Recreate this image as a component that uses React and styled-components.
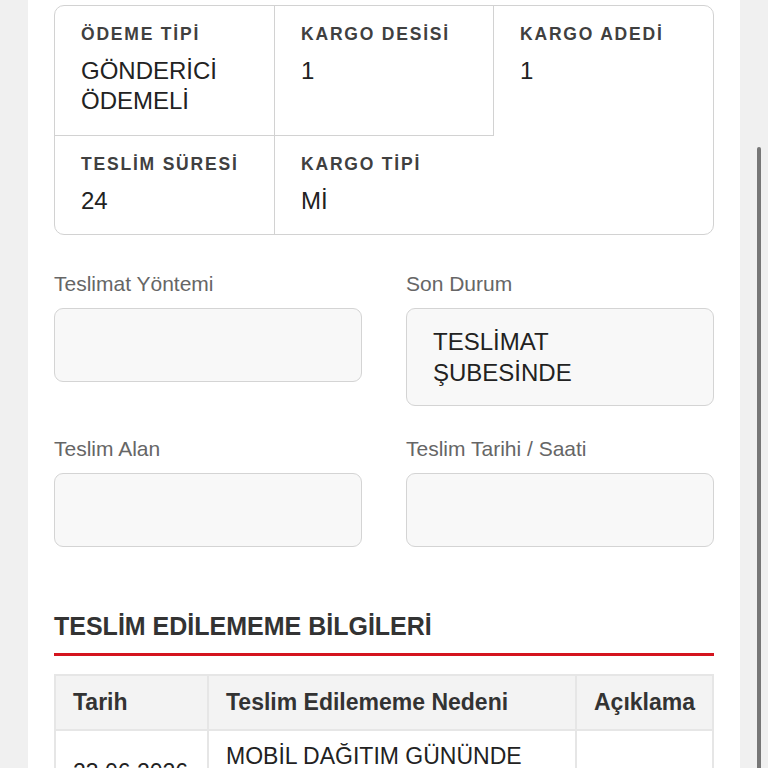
import React from "react";
import styled, { createGlobalStyle } from "styled-components";

const GlobalStyle = createGlobalStyle`
  html, body {
    margin: 0;
    padding: 0;
    background: #f0f0f0;
    font-family: "Liberation Sans", Arial, Helvetica, sans-serif;
    overflow: hidden;
  }
  * { box-sizing: border-box; }
`;

const Page = styled.div`
  display: flex;
  height: 768px;
  padding: 0 28px;
  background: #f0f0f0;
  overflow: hidden;
`;

const Panel = styled.main`
  flex: 1;
  background: #ffffff;
  padding: 5px 26px 0 26px;
`;

const InfoBox = styled.section`
  display: grid;
  grid-template-columns: 220px 219px 1fr;
  border: 1.5px solid #d2d2d2;
  border-radius: 10px;
`;

const InfoCell = styled.div`
  padding: 16px 20px 18.5px 26px;
  border-right: ${(p) => (p.$right ? "1.5px solid #d2d2d2" : "none")};
  border-bottom: ${(p) => (p.$bottom ? "1.5px solid #d2d2d2" : "none")};
`;

const InfoLabel = styled.div`
  font-size: 17.5px;
  line-height: 24px;
  font-weight: 700;
  letter-spacing: 1.8px;
  color: #404040;
`;

const InfoValue = styled.div`
  margin-top: 10px;
  font-size: 24px;
  line-height: 30px;
  color: #222222;
`;

const FormGrid = styled.section`
  display: grid;
  grid-template-columns: 1fr 1fr;
  column-gap: 44px;
  row-gap: 30px;
  margin-top: 36px;
  align-items: start;
`;

const Field = styled.div`
  display: flex;
  flex-direction: column;
`;

const FieldLabel = styled.label`
  font-size: 21px;
  line-height: 25px;
  color: #666666;
`;

const FieldBox = styled.div`
  margin-top: 12px;
  min-height: 74px;
  padding: 17px 26px;
  background: #f8f8f8;
  border: 1.5px solid #d4d4d4;
  border-radius: 9px;
  font-size: 24px;
  line-height: 31px;
  color: #222222;
`;

const SectionTitle = styled.h2`
  margin: 64px 0 0 0;
  font-size: 25px;
  line-height: 30px;
  font-weight: 700;
  color: #333333;
`;

const RedRule = styled.div`
  margin-top: 12px;
  height: 3px;
  background: #d4141e;
`;

const Table = styled.table`
  margin-top: 18px;
  width: 100%;
  border-collapse: collapse;
  table-layout: fixed;
  border: 2px solid #e6e6e6;
`;

const Th = styled.th`
  width: ${(p) => p.$w};
  height: 55px;
  padding: 0 17px;
  text-align: left;
  font-size: 23px;
  font-weight: 700;
  color: #333333;
  background: #f3f3f3;
  border: 2px solid #e6e6e6;
`;

const Td = styled.td`
  padding: 10px 17px;
  vertical-align: middle;
  font-size: 23px;
  line-height: 31px;
  color: #222222;
  border: 2px solid #e6e6e6;
`;

const ScrollThumb = styled.div`
  position: fixed;
  right: 7px;
  top: 147px;
  width: 4px;
  height: 660px;
  border-radius: 2px;
  background: #777777;
`;

const info = [
  { label: "ÖDEME TİPİ", value: ["GÖNDERİCİ", "ÖDEMELİ"], right: true, bottom: true },
  { label: "KARGO DESİSİ", value: ["1"], right: true, bottom: true },
  { label: "KARGO ADEDİ", value: ["1"] },
  { label: "TESLİM SÜRESİ", value: ["24"], right: true },
  { label: "KARGO TİPİ", value: ["Mİ"] },
];

const fields = [
  { label: "Teslimat Yöntemi", value: [] },
  { label: "Son Durum", value: ["TESLİMAT", "ŞUBESİNDE"] },
  { label: "Teslim Alan", value: [] },
  { label: "Teslim Tarihi / Saati", value: [] },
];

export default function App() {
  return (
    <>
      <GlobalStyle />
      <Page>
        <Panel>
          <InfoBox>
            {info.map((c) => (
              <InfoCell key={c.label} $right={c.right} $bottom={c.bottom}>
                <InfoLabel>{c.label}</InfoLabel>
                <InfoValue>
                  {c.value.map((v, i) => (
                    <div key={i}>{v}</div>
                  ))}
                </InfoValue>
              </InfoCell>
            ))}
          </InfoBox>

          <FormGrid>
            {fields.map((f) => (
              <Field key={f.label}>
                <FieldLabel>{f.label}</FieldLabel>
                <FieldBox>
                  {f.value.map((v, i) => (
                    <div key={i}>{v}</div>
                  ))}
                </FieldBox>
              </Field>
            ))}
          </FormGrid>

          <SectionTitle>TESLİM EDİLEMEME BİLGİLERİ</SectionTitle>
          <RedRule />

          <Table>
            <thead>
              <tr>
                <Th $w="153px">Tarih</Th>
                <Th $w="368px">Teslim Edilememe Nedeni</Th>
                <Th>Açıklama</Th>
              </tr>
            </thead>
            <tbody>
              <tr>
                <Td>23.06.2026</Td>
                <Td>
                  MOBİL DAĞITIM GÜNÜNDE
                  <br />
                  TESLİM EDİLEMEDİ
                </Td>
                <Td></Td>
              </tr>
            </tbody>
          </Table>
        </Panel>
      </Page>
      <ScrollThumb />
    </>
  );
}
